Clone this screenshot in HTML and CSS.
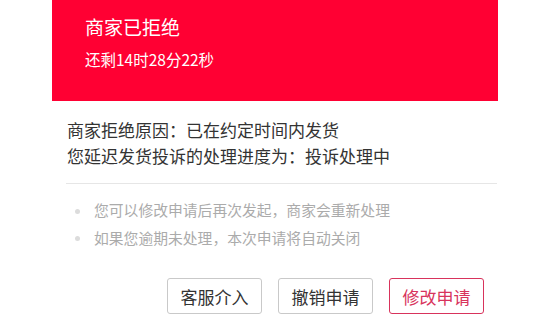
FILE: index.html
```html
<!DOCTYPE html>
<html lang="zh-CN">
<head>
<meta charset="utf-8">
<link rel="stylesheet" href="styles.css">
</head>
<body>
<div class="page">
  <div class="header">
    <div class="title">商家已拒绝</div>
    <div class="countdown">还剩14时28分22秒</div>
  </div>
  <div class="content">
    <div class="reason">
      <p>商家拒绝原因：已在约定时间内发货</p>
      <p>您延迟发货投诉的处理进度为：投诉处理中</p>
    </div>
    <div class="divider"></div>
    <ul class="tips">
      <li>您可以修改申请后再次发起，商家会重新处理</li>
      <li>如果您逾期未处理，本次申请将自动关闭</li>
    </ul>
    <div class="actions">
      <button class="btn">客服介入</button>
      <button class="btn">撤销申请</button>
      <button class="btn primary">修改申请</button>
    </div>
  </div>
</div>
</body>
</html>
```
FILE: styles.css
```css
html, body {
  margin: 0;
  padding: 0;
  background: #ffffff;
}
body {
  font-family: "Noto Sans CJK SC", "Noto Sans", sans-serif;
  color: #333333;
}
.page {
  margin-left: 52px;
  width: 446px;
}
.header {
  background: #ff0033;
  height: 101px;
  box-sizing: border-box;
  padding: 13px 0 0 33px;
  color: #ffffff;
}
.title {
  font-size: 19px;
  line-height: 27px;
}
.countdown {
  font-size: 15.5px;
  line-height: 22px;
  margin-top: 8px;
}
.content {
  padding-left: 15px;
}
.reason {
  margin-top: 16px;
}
.reason p {
  margin: 0;
  font-size: 17px;
  line-height: 26px;
  color: #333333;
}
.divider {
  height: 1px;
  background: #e6e6e6;
  margin: 14px 1px 0 -1px;
}
.tips {
  list-style: none;
  margin: 12px 0 0 0;
  padding: 0;
}
.tips li {
  display: flex;
  align-items: center;
  font-size: 14.8px;
  line-height: 27.5px;
  color: #ababab;
}
.tips li::before {
  content: "";
  width: 5px;
  height: 5px;
  border-radius: 50%;
  background: #dcdcdc;
  margin: 3px 14px 0 8px;
  flex: none;
}
.actions {
  display: flex;
  justify-content: flex-end;
  gap: 16px;
  margin-top: 27px;
  padding-right: 14px;
}
.btn {
  width: 95px;
  height: 36px;
  border: 1px solid #c9c9c9;
  border-radius: 3px;
  background: #ffffff;
  font-family: "Noto Sans CJK SC", "Noto Sans", sans-serif;
  font-size: 17px;
  color: #333333;
  padding: 0;
}
.btn.primary {
  border-color: #d8335c;
  color: #d8335c;
}
```
